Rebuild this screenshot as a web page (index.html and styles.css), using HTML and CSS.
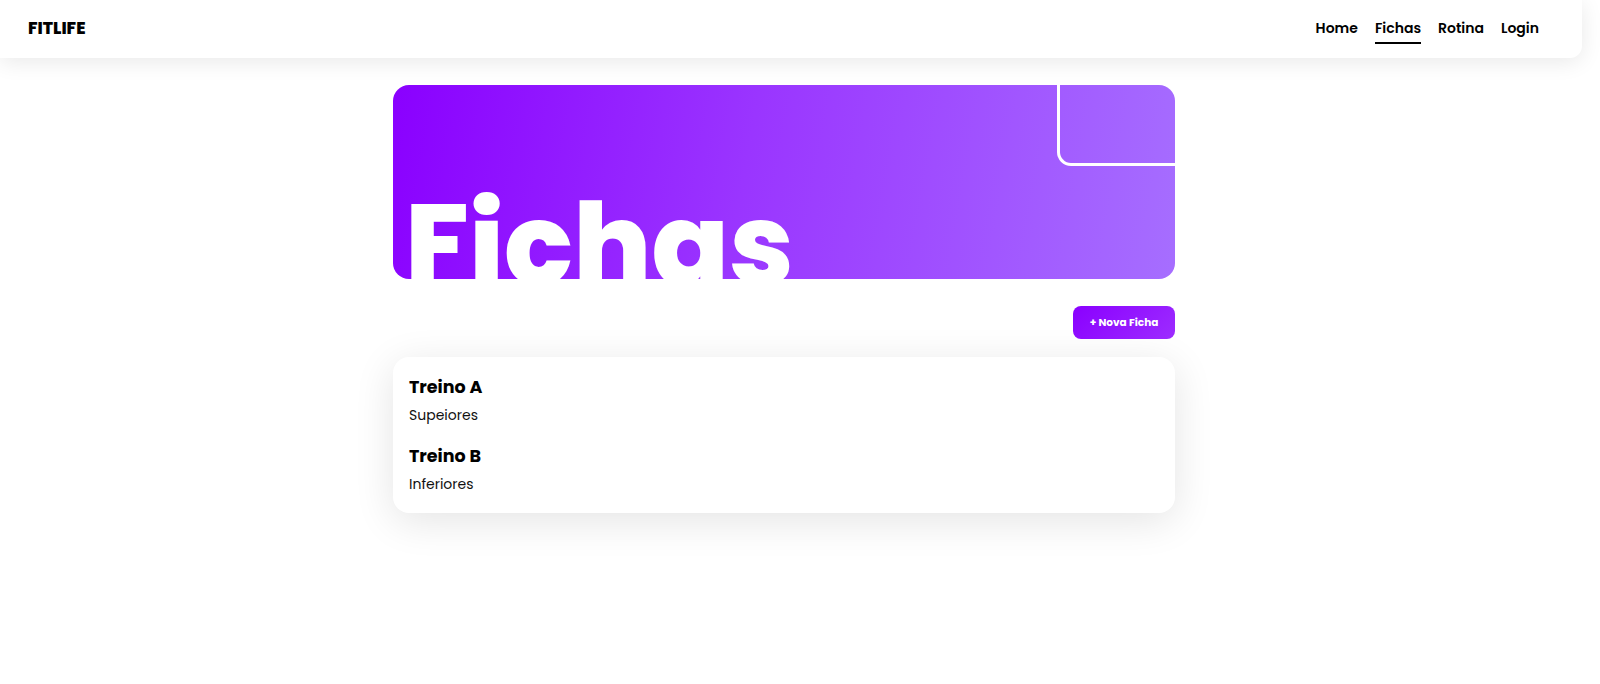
FILE: index.html
```html
<!DOCTYPE html>
<html lang="pt">
<head>
<meta charset="utf-8">
<title>FitLife - Fichas</title>
<link rel="stylesheet" href="styles.css">
</head>
<body>
<header class="topbar">
  <div class="logo">FITLIFE</div>
  <nav class="nav">
    <a class="nav-link" href="#">Home</a>
    <a class="nav-link active" href="#">Fichas</a>
    <a class="nav-link" href="#">Rotina</a>
    <a class="nav-link" href="#">Login</a>
  </nav>
</header>
<main class="main">
  <div class="content">
    <section class="hero">
      <div class="hero-corner"></div>
      <h1 class="hero-title">Fichas</h1>
    </section>
    <div class="toolbar">
      <button class="btn-new">+ Nova Ficha</button>
    </div>
    <section class="card">
      <div class="item">
        <h3 class="item-title">Treino A</h3>
        <p class="item-desc">Supeiores</p>
      </div>
      <div class="item">
        <h3 class="item-title">Treino B</h3>
        <p class="item-desc">Inferiores</p>
      </div>
    </section>
  </div>
</main>
</body>
</html>
```
FILE: styles.css
```css
* { box-sizing: border-box; }
html, body { margin: 0; padding: 0; background: #fff; }
body {
  font-family: "Poppins", "Inter", "Noto Sans", sans-serif;
  color: #000;
  min-height: 684px;
}
.topbar {
  width: calc(100% - 18px);
  height: 58px;
  background: #fff;
  border-bottom-right-radius: 12px;
  box-shadow: 0 4px 22px rgba(0,0,0,0.09);
  display: flex;
  justify-content: space-between;
  align-items: flex-start;
  padding: 18px 43px 0 28px;
  position: relative;
  z-index: 2;
}
.logo {
  font-size: 17px;
  font-weight: 800;
  line-height: 21px;
}
.nav {
  display: flex;
  gap: 17px;
}
.nav-link {
  font-size: 14px;
  font-weight: 600;
  line-height: 21px;
  color: #000;
  text-decoration: none;
  padding-bottom: 3px;
  border-bottom: 2px solid transparent;
}
.nav-link.active { border-bottom-color: #000; }
.main {
  display: flex;
  justify-content: center;
  padding-right: 32px;
  padding-top: 27px;
}
.content { width: 782px; }
.hero {
  position: relative;
  height: 194px;
  border-radius: 16px;
  overflow: hidden;
  background: linear-gradient(100deg, #8a00ff 0%, #9a35ff 45%, #a66eff 100%);
  padding: 103px 0 0 12px;
}
.hero-corner {
  position: absolute;
  top: 0;
  right: 0;
  width: 118px;
  height: 81px;
  border-left: 3px solid #fff;
  border-bottom: 3px solid #fff;
  border-bottom-left-radius: 14px;
}
.hero-title {
  margin: 0;
  font-size: 114px;
  font-weight: 800;
  line-height: 1;
  color: #fff;
}
.toolbar {
  display: flex;
  justify-content: flex-end;
  margin-top: 27px;
}
.btn-new {
  width: 102px;
  height: 33px;
  border: none;
  border-radius: 8px;
  background: linear-gradient(135deg, #8a00ff, #9d2cff);
  color: #fff;
  font-family: inherit;
  font-size: 10.5px;
  font-weight: 700;
  cursor: pointer;
}
.card {
  margin-top: 18px;
  background: #fff;
  border-radius: 16px;
  box-shadow: 0 8px 40px rgba(0,0,0,0.11);
  padding: 17px 16px 18px;
  display: flex;
  flex-direction: column;
  gap: 17px;
}
.item-title {
  margin: 0;
  font-size: 17.5px;
  font-weight: 700;
  line-height: 27px;
}
.item-desc {
  margin: 4px 0 0;
  font-size: 14px;
  font-weight: 400;
  line-height: 21px;
  color: #111;
}
```
